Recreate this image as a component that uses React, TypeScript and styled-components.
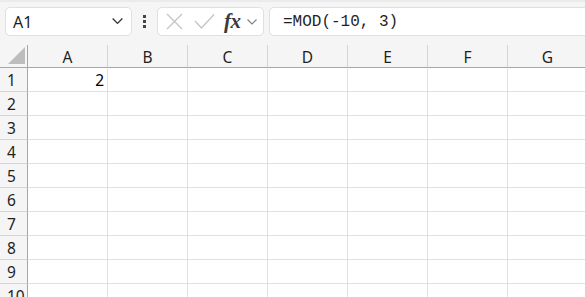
import React from 'react';
import styled, { createGlobalStyle } from 'styled-components';

const GlobalStyle = createGlobalStyle`
    html, body {
        margin: 0;
        padding: 0;
        background: #ffffff;
    }
    body {
        font-family: "Noto Sans", "Open Sans", sans-serif;
    }
`;

const COLUMNS = ['A', 'B', 'C', 'D', 'E', 'F', 'G'];
const ROWS = [1, 2, 3, 4, 5, 6, 7, 8, 9, 10];

const Sheet = styled.div`
    width: 585px;
    height: 297px;
    overflow: hidden;
    background: #ffffff;
    display: flex;
    flex-direction: column;
`;

const Toolbar = styled.div`
    flex-shrink: 0;
    height: 45px;
    box-sizing: border-box;
    display: flex;
    align-items: flex-start;
    padding: 5px 0 0 5px;
    background: #f5f5f5;
    border-top: 2px solid #ebebeb;
`;

const Box = styled.div`
    height: 29px;
    box-sizing: border-box;
    background: #ffffff;
    border: 1px solid #e0e0e0;
    border-radius: 5px;
    display: flex;
    align-items: center;
`;

const NameBox = styled(Box)`
    width: 127px;
    padding: 0 8px 0 7px;
    justify-content: space-between;
    font-size: 16px;
    color: #1f1f1f;
`;

const Grip = styled.div`
    width: 25px;
    height: 29px;
    display: flex;
    flex-direction: column;
    align-items: center;
    justify-content: center;
    gap: 2px;
`;

const Dot = styled.span`
    width: 3px;
    height: 3px;
    background: #444444;
`;

const FuncBox = styled(Box)`
    width: 107px;
    padding: 0 0 0 8px;
`;

const FxLabel = styled.span`
    font-family: "Liberation Serif", serif;
    font-style: italic;
    font-weight: 600;
    font-size: 21px;
    color: #3a3a3a;
    margin-left: 9px;
    letter-spacing: -0.5px;
`;

const FormulaBox = styled(Box)`
    flex: 1;
    margin-left: 5px;
    margin-right: -10px;
    padding-left: 13px;
    font-family: "Liberation Mono", "DejaVu Sans Mono", monospace;
    font-size: 16px;
    color: #1f1f1f;
`;

const Grid = styled.div`
    flex-shrink: 0;
    display: grid;
    grid-template-columns: 28px repeat(7, 80px);
    grid-template-rows: 23px repeat(10, 24px);
    background: #ffffff;
`;

const Corner = styled.div`
    background: #f5f5f5;
    border-right: 1px solid #a6a6a6;
    border-bottom: 1px solid #a6a6a6;
    box-sizing: border-box;
    display: flex;
    align-items: flex-end;
    justify-content: flex-end;
    padding: 0 2px 3px 0;
`;

const ColHeader = styled.div`
    background: #f5f5f5;
    border-right: 1px solid #d4d4d4;
    border-bottom: 1px solid #a6a6a6;
    box-sizing: border-box;
    display: flex;
    align-items: center;
    justify-content: center;
    font-size: 15.5px;
    color: #1f1f1f;
    padding-top: 1px;
`;

const RowHeader = styled.div`
    background: #f5f5f5;
    border-right: 1px solid #a6a6a6;
    border-bottom: 1px solid #d4d4d4;
    box-sizing: border-box;
    display: flex;
    align-items: center;
    padding-left: 7px;
    font-size: 15.5px;
    color: #1f1f1f;
`;

const Cell = styled.div`
    border-right: 1px solid #e1e1e1;
    border-bottom: 1px solid #e1e1e1;
    box-sizing: border-box;
    display: flex;
    align-items: center;
    justify-content: flex-end;
    padding-right: 3px;
    font-size: 15.5px;
    color: #000000;
`;

const ChevronSlot = styled.span`
    display: flex;
    margin-left: 6px;
`;

function Chevron({ size = 10, color = '#444' }: { size?: number; color?: string }) {
    return (
        <svg width={size} height={size / 2 + 1} viewBox="0 0 10 6">
            <path d="M0.5 0.5 L5 5 L9.5 0.5" fill="none" stroke={color} strokeWidth="1.2" />
        </svg>
    );
}

export default function App() {
    const data: Record<string, string> = { A1: '2' };

    return (
        <Sheet>
            <GlobalStyle />
            <Toolbar>
                <NameBox>
                    <span>A1</span>
                    <Chevron size={11} color="#333" />
                </NameBox>
                <Grip>
                    <Dot />
                    <Dot />
                    <Dot />
                </Grip>
                <FuncBox>
                    <svg width="17" height="17" viewBox="0 0 17 17">
                        <path d="M1 1 L16 16 M16 1 L1 16" stroke="#c4c4c4" strokeWidth="1.3" fill="none" />
                    </svg>
                    <svg width="21" height="17" viewBox="0 0 21 17" style={{ marginLeft: 11 }}>
                        <path d="M1 8 L7.5 15 L20 1.5" stroke="#c4c4c4" strokeWidth="1.3" fill="none" />
                    </svg>
                    <FxLabel>fx</FxLabel>
                    <ChevronSlot>
                        <Chevron size={10} color="#808080" />
                    </ChevronSlot>
                </FuncBox>
                <FormulaBox>=MOD(-10, 3)</FormulaBox>
            </Toolbar>
            <Grid>
                <Corner>
                    <svg width="17" height="17" viewBox="0 0 17 17">
                        <polygon points="17,0 17,17 0,17" fill="#bdbdbd" />
                    </svg>
                </Corner>
                {COLUMNS.map(col => (
                    <ColHeader key={col}>{col}</ColHeader>
                ))}
                {ROWS.map(row => (
                    <React.Fragment key={row}>
                        <RowHeader>{row}</RowHeader>
                        {COLUMNS.map(col => (
                            <Cell key={col + row}>{data[col + row] ?? ''}</Cell>
                        ))}
                    </React.Fragment>
                ))}
            </Grid>
        </Sheet>
    );
}
